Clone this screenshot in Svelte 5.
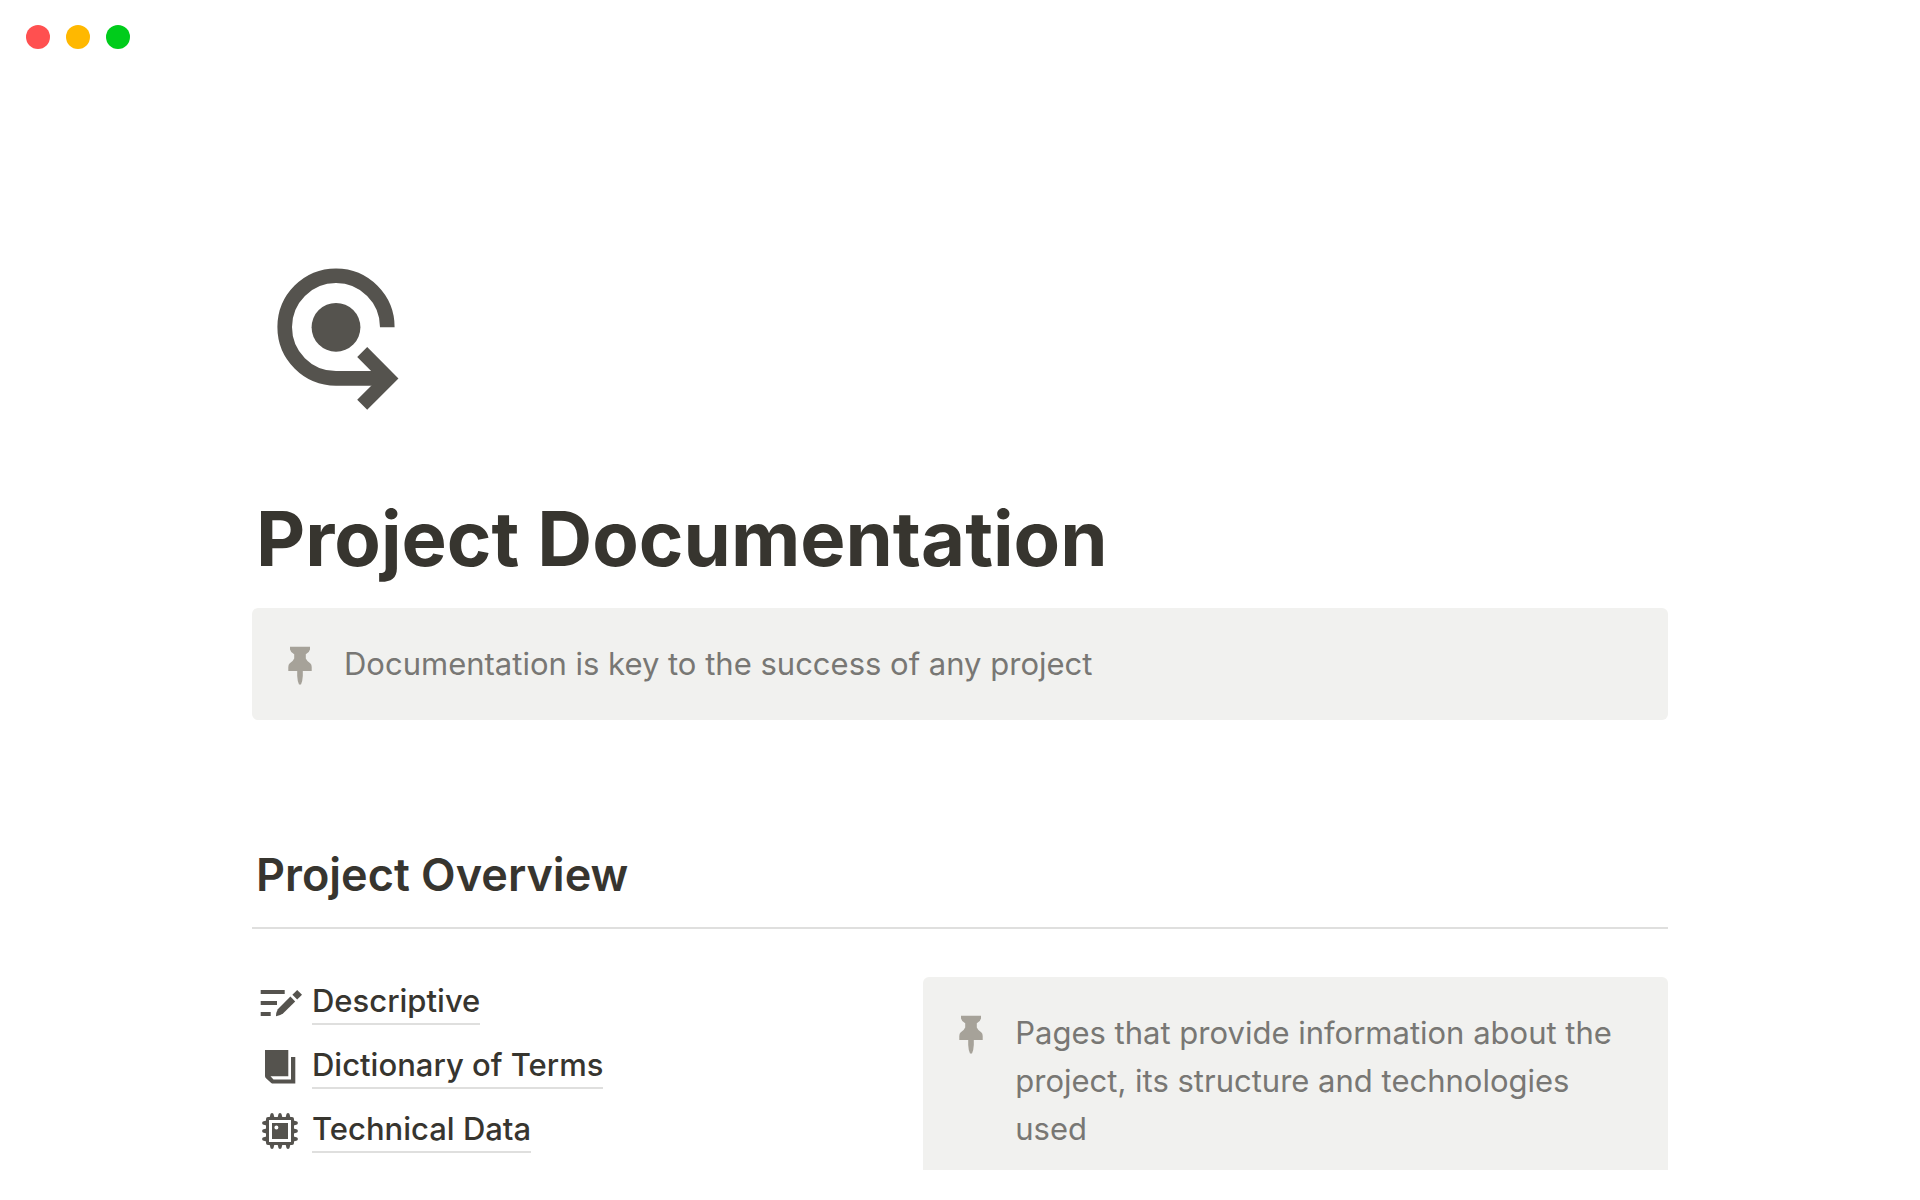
<script>
  /** Window control buttons */
  const controls = [
    { name: 'close', label: 'Close window' },
    { name: 'minimize', label: 'Minimize window' },
    { name: 'zoom', label: 'Zoom window' }
  ];

  /** Sub pages listed in the overview */
  const pages = [
    { href: '#descriptive', label: 'Descriptive', icon: 'draft' },
    { href: '#dictionary', label: 'Dictionary of Terms', icon: 'book' },
    { href: '#technical', label: 'Technical Data', icon: 'chip' }
  ];

  const pinOffsets = [16, 24, 32];
  const sides = [0, 90, 180, 270];
</script>

{#snippet callout(text)}
  <svg class="callout-icon" viewBox="0 0 48 48" aria-hidden="true">
    <path
      d="M14 6.7H34V9.5Q33.6 12 29.8 14.2V18.5Q31 21.4 34.2 23.2Q35.7 24.4 35.7 27V31H26.8V36Q26.6 41 25 44.4H23Q21.4 41 21.2 36V31H12.3V27Q12.3 24.4 13.8 23.2Q17 21.4 18.2 18.5V14.2Q14.4 12 14 9.5Z"
    />
  </svg>
  <p class="callout-text">{text}</p>
{/snippet}

<header class="titlebar">
  {#each controls as control}
    <button class="control {control.name}" aria-label={control.label}></button>
  {/each}
</header>

<main class="page">
  <!-- Page icon -->
  <svg class="page-icon" viewBox="0 0 156 156" aria-hidden="true">
    <circle cx="84" cy="65.3" r="24.4" fill="currentColor" />
    <g fill="none" stroke="currentColor">
      <path d="M135.3 65.2A51.3 51.3 0 1 0 84 116.4H136" stroke-width="14.6" />
      <path d="M110.2 90L136.5 116.4L110.2 142.8" stroke-width="14.1" />
    </g>
  </svg>

  <h1>Project Documentation</h1>

  <aside class="callout">
    {@render callout('Documentation is key to the success of any project')}
  </aside>

  <section class="overview">
    <h2>Project Overview</h2>

    <div class="columns">
      <ul class="page-list">
        {#each pages as page}
          <li class="page-item">
            <svg class="item-icon" viewBox="0 0 48 48" aria-hidden="true">
              {#if page.icon === 'draft'}
                <path d="M4.7 11H28.7V15H4.7ZM4.7 22H21V26H4.7ZM4.7 33H14.7V37H4.7Z" />
                <path d="M34.4 17.6L39.2 22.4L27 34.6Q25 36.4 20 37.2Q20 33.2 21.8 30.2Z" />
                <path d="M41.2 11L46 15.8L41.2 20.5L36.4 15.8Z" />
              {:else if page.icon === 'book'}
                <path d="M9 7H32.3V33.2H14.5L17.5 36.4H35V14H39.3V40.6H17Q16 40.6 15.2 39.9L10 35.2Q9 34.4 9 33Z" />
              {:else}
                <path
                  fill-rule="evenodd"
                  d="M12 10H36Q38 10 38 12V36Q38 38 36 38H12Q10 38 10 36V12Q10 10 12 10ZM13 13V35H35V13ZM16 16H32V32H16ZM20.4 18.4A2 2 0 1 0 20.4 22.4A2 2 0 1 0 20.4 18.4Z"
                />
                {#each sides as side}
                  <g transform="rotate({side} 24 24)">
                    {#each pinOffsets as x}
                      <path d="M{x - 2.4} 10.4L{x - 1.4} 6.8Q{x} 5.2 {x + 1.4} 6.8L{x + 2.4} 10.4Z" />
                    {/each}
                  </g>
                {/each}
              {/if}
            </svg>
            <a href={page.href} class="item-link">{page.label}</a>
          </li>
        {/each}
      </ul>

      <aside class="callout continued">
        {@render callout('Pages that provide information about the project, its structure and technologies used')}
      </aside>
    </div>
  </section>
</main>

<style>
  :global(body) {
    background: #ffffff;
    color: #37352f;
    font-family: Inter, 'Liberation Sans', sans-serif;
    font-size: 31px;
  }

  /* Window controls */
  .titlebar {
    display: flex;
    gap: 16px;
    padding: 25px 26px;
  }

  .control {
    width: 24px;
    height: 24px;
    padding: 0;
    border: 0;
    border-radius: 50%;
  }

  .close {
    background: #ff5050;
  }

  .minimize {
    background: #ffb800;
  }

  .zoom {
    background: #00cc1b;
  }

  /* Page */
  .page {
    box-sizing: border-box;
    max-width: 1464px;
    margin: 0 auto;
    padding: 188px 24px 0;
  }

  .page-icon {
    display: block;
    width: 156px;
    height: 156px;
    color: #55534e;
  }

  h1 {
    margin: 72px 0 22px;
    padding: 0 4px;
    font-size: 76px;
    font-weight: 700;
    line-height: 96px;
  }

  h2 {
    margin: 0;
    padding: 0 4px 20px;
    border-bottom: 2px solid #dfdfde;
    font-size: 45px;
    font-weight: 600;
    line-height: 64px;
  }

  .overview {
    margin-top: 123px;
  }

  .columns {
    display: grid;
    grid-template-columns: 7fr 9fr;
    align-items: start;
    gap: 92px;
    margin-top: 48px;
  }

  /* Callout */
  .callout {
    display: flex;
    gap: 20px;
    padding: 32px 32px 32px 24px;
    border-radius: 6px;
    background: #f1f1ef;
  }

  .callout.continued {
    padding-bottom: 17px;
    border-radius: 6px 6px 0 0;
  }

  .callout-icon {
    flex: none;
    width: 48px;
    height: 48px;
    fill: #a6a299;
  }

  .callout-text {
    margin: 0;
    color: #787774;
    line-height: 48px;
  }

  /* Page links */
  .page-list {
    margin: 0;
    padding: 0;
    list-style: none;
  }

  .page-item {
    display: flex;
    align-items: flex-start;
    gap: 8px;
    padding: 2px 4px 14px;
  }

  .item-icon {
    flex: none;
    width: 48px;
    height: 48px;
    fill: #55534e;
  }

  .item-link {
    border-bottom: 2px solid #dfdfde;
    color: inherit;
    font-weight: 500;
    line-height: 44px;
    text-decoration: none;
  }
</style>
